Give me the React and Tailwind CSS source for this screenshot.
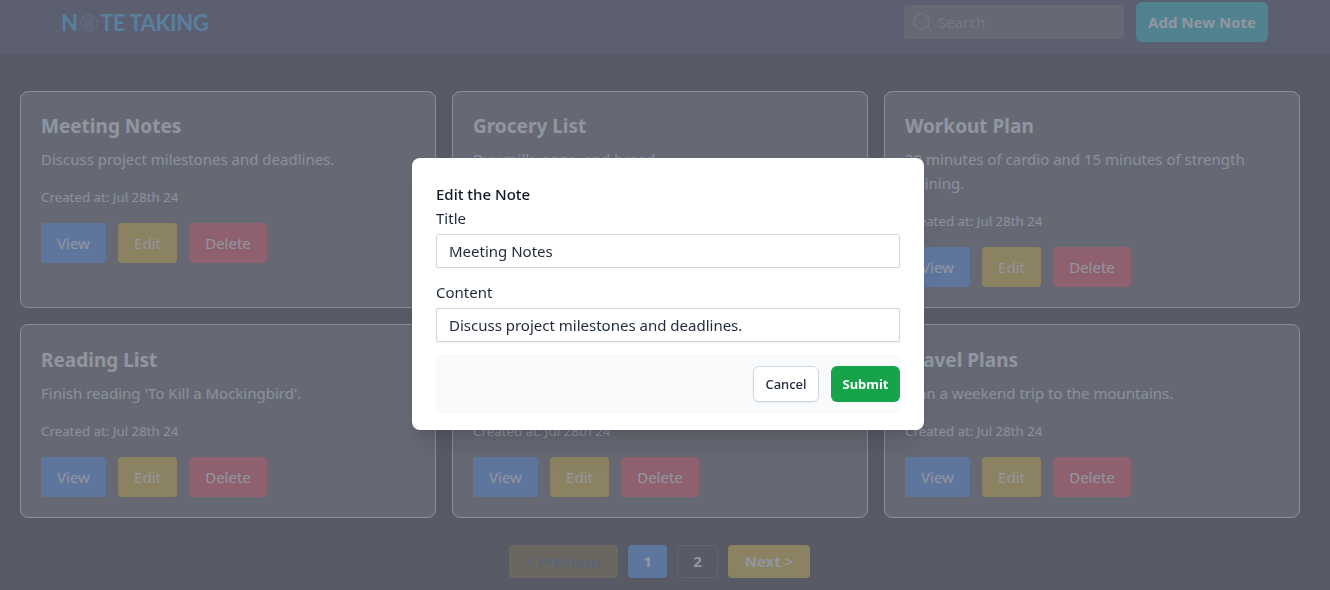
import React from 'react';
import { Search } from 'lucide-react';

const notes = [
  { id: 1, title: 'Meeting Notes', body: 'Discuss project milestones and deadlines.' },
  { id: 2, title: 'Grocery List', body: 'Buy milk, eggs, and bread.' },
  { id: 3, title: 'Workout Plan', body: '30 minutes of cardio and 15 minutes of strength training.' },
  { id: 4, title: 'Reading List', body: "Finish reading 'To Kill a Mockingbird'." },
  { id: 5, title: 'Project Ideas', body: 'Brainstorm new features for the app.' },
  { id: 6, title: 'Travel Plans', body: 'Plan a weekend trip to the mountains.' },
];

// Logo letters stay real text, only the note glyph in the O is drawn
function Logo() {
  return (
    <div className="mb-2 ml-[61px] flex items-center font-['Lato',sans-serif] text-[22px] leading-none font-bold text-[#25a6f7]">
      <span>N</span>
      <svg width="18" height="18" viewBox="0 0 20 20" className="mx-[2px]" fill="none" stroke="#4f7396" strokeWidth="1">
        <circle cx="10" cy="10" r="9" />
        <rect x="6" y="4.5" width="8" height="11" rx="1" />
        <path d="M7.5 7.5h5M7.5 10h5M7.5 12.5h5" />
      </svg>
      <span className="tracking-[-0.4px]">TE TAKING</span>
    </div>
  );
}

function NoteCard({ note }) {
  return (
    <div className="rounded-lg border border-[#dfe3ea] bg-[#59504e] px-5 pt-[20.3px] pb-5">
      <h2 className="text-[19px] leading-7 font-bold text-white">{note.title}</h2>
      <p className="mt-[7px] text-[15px] leading-6 text-gray-200">{note.body}</p>
      <p className="mt-[14.1px] text-[13.3px] leading-6 text-gray-200">Created at: Jul 28th 24</p>
      <div className="mt-[14px] flex gap-3">
        <button className="h-10 w-[65px] rounded bg-[#3b82f6] text-[15px] text-white">View</button>
        <button className="h-10 w-[59px] rounded bg-[#eab308] text-[15px] text-white">Edit</button>
        <button className="h-10 w-[78px] rounded bg-red-500 text-[15px] text-white">Delete</button>
      </div>
    </div>
  );
}

function EditModal() {
  return (
    <div className="fixed inset-0 flex items-center justify-center bg-[#6b7280]/75 pb-[2px] pl-[6px]">
      <div className="h-[272px] w-[512px] rounded-lg bg-white p-6 pt-[25px] shadow-xl">
        <h3 className="text-[15px] leading-[23px] font-medium text-gray-900">Edit the Note</h3>
        <label className="block text-[15px] leading-[24px] text-gray-800">Title</label>
        <input
          readOnly
          value="Meeting Notes"
          className="mt-1 block h-[34px] w-full rounded-[2px] border border-gray-300 px-3 text-[15px] text-gray-800 shadow-xs"
        />
        <label className="mt-3 block text-[15px] leading-[24px] text-gray-800">Content</label>
        <input
          readOnly
          value="Discuss project milestones and deadlines."
          className="mt-1 block h-[34px] w-full rounded-[2px] border border-gray-300 px-3 text-[15px] text-gray-800 shadow-xs"
        />
        <div className="mt-3 flex h-[60px] items-center justify-end gap-3 bg-gray-50">
          <button className="h-9 w-[66px] rounded-md border border-gray-300 bg-white pt-px text-[13px] font-medium text-gray-800 shadow-xs">
            Cancel
          </button>
          <button className="h-9 w-[69px] rounded-md bg-[#16a34a] pt-px text-[13px] font-bold text-white">Submit</button>
        </div>
      </div>
    </div>
  );
}

export default function App() {
  return (
    <div className="h-[590px] overflow-hidden bg-[#211817] font-['Noto_Sans',sans-serif]">
      <header className="flex h-[54px] items-center justify-between bg-[#2d2a41]">
        <Logo />
        <div className="mr-[62px] mb-[10px] flex items-center gap-3">
          <div className="flex h-[34px] w-[220px] items-center gap-[4px] rounded bg-[#584f4e] px-[7px]">
            <Search size={23} strokeWidth={1.5} className="text-[#837f80]" />
            <span className="text-[15px] text-[#8a8a8d]">Search</span>
          </div>
          <button className="h-10 w-[132px] rounded-md bg-[#00b6bc] text-[15px] font-bold text-white">Add New Note</button>
        </div>
      </header>

      <main className="w-[1300px] pt-[37px] pl-5">
        <div className="grid w-[1280px] grid-cols-3 gap-4">
          {notes.map((note) => (
            <NoteCard key={note.id} note={note} />
          ))}
        </div>
        <div className="mt-[27px] mr-px flex justify-center gap-[10px]">
          <button className="h-[33px] w-[109px] rounded bg-[#6a4a00] text-[15px] font-bold text-[#2a3a60]">&lt; Previous</button>
          <button className="h-[33px] w-[39px] rounded bg-[#3b82f6] text-[15px] font-bold text-white">1</button>
          <button className="h-[33px] w-[41px] rounded border border-gray-700 text-[15px] font-bold text-white">2</button>
          <button className="h-[33px] w-[82px] rounded bg-[#eab308] text-[15px] font-bold text-white">Next &gt;</button>
        </div>
      </main>

      <EditModal />
    </div>
  );
}
